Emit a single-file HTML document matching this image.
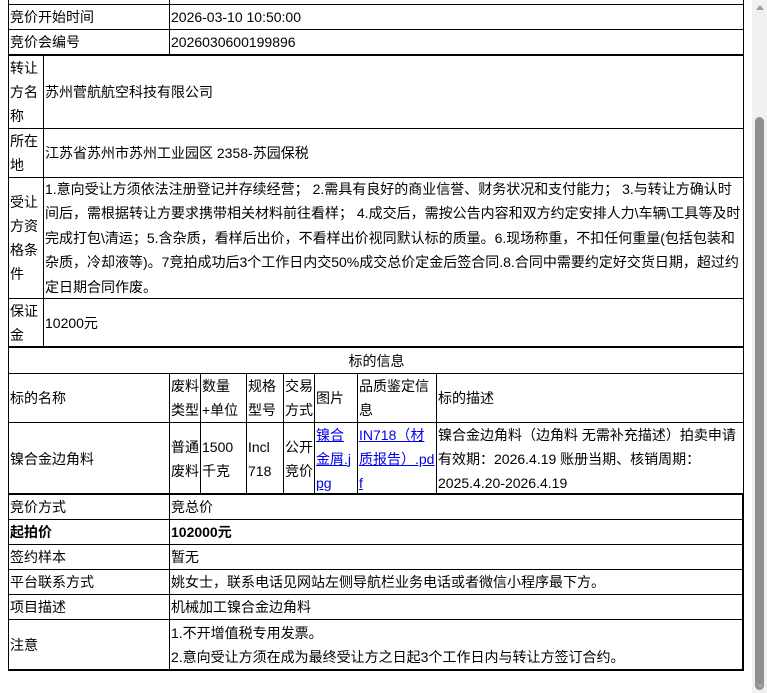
<!DOCTYPE html>
<html><head><meta charset="utf-8"><style>
*{margin:0;padding:0;box-sizing:border-box}
body{width:767px;height:693px;overflow:hidden;background:#fff;position:relative;font-family:"Liberation Sans","Noto Sans CJK SC",sans-serif;font-size:14px;color:#000}
.c{position:absolute;border:1px solid #000;display:flex;align-items:center;padding-left:1px;line-height:24px;overflow:hidden}
.t{position:absolute;background:#000}
a{color:#00e;text-decoration:underline}
.sb{position:absolute;left:752px;top:0;width:15px;height:693px;background:#f1f1f1}
.th{position:absolute;left:755px;top:117px;width:9px;height:573px;background:#8f8f8f;border-radius:5px}
</style></head><body>
<div class="c" style="left:8px;top:-20px;width:162px;height:25px"></div>
<div class="c" style="left:169px;top:-20px;width:575px;height:25px"></div>
<div class="c" style="left:8px;top:4px;width:162px;height:26px">竞价开始时间</div>
<div class="c" style="left:169px;top:4px;width:575px;height:26px">2026-03-10 10:50:00</div>
<div class="c" style="left:8px;top:29px;width:162px;height:26px">竞价会编号</div>
<div class="c" style="left:169px;top:29px;width:575px;height:26px">2026030600199896</div>
<div class="t" style="left:8px;top:54px;width:736px;height:2px"></div>

<div class="c" style="left:8px;top:55px;width:36px;height:74px">转让<br>方名<br>称</div>
<div class="c" style="left:43px;top:55px;width:701px;height:74px">苏州菅航航空科技有限公司</div>
<div class="c" style="left:8px;top:128px;width:36px;height:50px">所在<br>地</div>
<div class="c" style="left:43px;top:128px;width:701px;height:50px">江苏省苏州市苏州工业园区 2358-苏园保税</div>
<div class="c" style="left:8px;top:177px;width:36px;height:122px">受让<br>方资<br>格条<br>件</div>
<div class="c" style="left:43px;top:177px;width:701px;height:122px;line-height:24.4px">1.意向受让方须依法注册登记并存续经营； 2.需具有良好的商业信誉、财务状况和支付能力； 3.与转让方确认时间后，需根据转让方要求携带相关材料前往看样； 4.成交后，需按公告内容和双方约定安排人力\车辆\工具等及时完成打包\清运；5.含杂质，看样后出价，不看样出价视同默认标的质量。6.现场称重，不扣任何重量(包括包装和杂质，冷却液等)。7竞拍成功后3个工作日内交50%成交总价定金后签合同.8.合同中需要约定好交货日期，超过约定日期合同作废。</div>
<div class="c" style="left:8px;top:298px;width:36px;height:50px">保证<br>金</div>
<div class="c" style="left:43px;top:298px;width:701px;height:50px">10200元</div>
<div class="t" style="left:8px;top:346px;width:736px;height:2px"></div>

<div class="c" style="left:8px;top:347px;width:736px;height:27px;justify-content:center">标的信息</div>
<div class="c" style="left:8px;top:373px;width:162px;height:50px">标的名称</div>
<div class="c" style="left:169px;top:373px;width:32px;height:50px">废料<br>类型</div>
<div class="c" style="left:200px;top:373px;width:47px;height:50px">数量<br>+单位</div>
<div class="c" style="left:246px;top:373px;width:38px;height:50px">规格<br>型号</div>
<div class="c" style="left:283px;top:373px;width:32px;height:50px">交易<br>方式</div>
<div class="c" style="left:314px;top:373px;width:44px;height:50px">图片</div>
<div class="c" style="left:357px;top:373px;width:80px;height:50px">品质鉴定信<br>息</div>
<div class="c" style="left:436px;top:373px;width:308px;height:50px">标的描述</div>
<div class="c" style="left:8px;top:422px;width:162px;height:73px">镍合金边角料</div>
<div class="c" style="left:169px;top:422px;width:32px;height:73px">普通<br>废料</div>
<div class="c" style="left:200px;top:422px;width:47px;height:73px">1500<br>千克</div>
<div class="c" style="left:246px;top:422px;width:38px;height:73px">Incl<br>718</div>
<div class="c" style="left:283px;top:422px;width:32px;height:73px">公开<br>竞价</div>
<div class="c" style="left:314px;top:422px;width:44px;height:73px"><a>镍合<br>金屑.j<br>pg</a></div>
<div class="c" style="left:357px;top:422px;width:80px;height:73px"><a>IN718（材<br>质报告）.pd<br>f</a></div>
<div class="c" style="left:436px;top:422px;width:308px;height:73px">镍合金边角料（边角料 无需补充描述）拍卖申请<br>有效期：2026.4.19 账册当期、核销周期：<br>2025.4.20-2026.4.19</div>
<div class="t" style="left:8px;top:493px;width:736px;height:2px"></div>

<div class="c" style="left:8px;top:494px;width:162px;height:26px">竞价方式</div>
<div class="c" style="left:169px;top:494px;width:575px;height:26px;border-right-width:2px">竞总价</div>
<div class="c" style="left:8px;top:519px;width:162px;height:26px;font-weight:bold">起拍价</div>
<div class="c" style="left:169px;top:519px;width:575px;height:26px;border-right-width:2px;font-weight:bold">102000元</div>
<div class="c" style="left:8px;top:544px;width:162px;height:26px">签约样本</div>
<div class="c" style="left:169px;top:544px;width:575px;height:26px;border-right-width:2px">暂无</div>
<div class="c" style="left:8px;top:569px;width:162px;height:26px">平台联系方式</div>
<div class="c" style="left:169px;top:569px;width:575px;height:26px;border-right-width:2px">姚女士，联系电话见网站左侧导航栏业务电话或者微信小程序最下方。</div>
<div class="c" style="left:8px;top:594px;width:162px;height:26px">项目描述</div>
<div class="c" style="left:169px;top:594px;width:575px;height:26px;border-right-width:2px">机械加工镍合金边角料</div>
<div class="c" style="left:8px;top:619px;width:162px;height:52px;border-bottom-width:2px">注意</div>
<div class="c" style="left:169px;top:619px;width:575px;height:52px;border-right-width:2px;border-bottom-width:2px">1.不开增值税专用发票。<br>2.意向受让方须在成为最终受让方之日起3个工作日内与转让方签订合约。</div>

<div class="sb"></div>
<div class="th"></div>
<svg style="position:absolute;left:755px;top:3px" width="10" height="8"><path d="M1 7 L5 2 L9 7 Z" fill="#a0a0a0"/></svg>
<svg style="position:absolute;left:755px;top:683px" width="10" height="8"><path d="M1 1 L5 6 L9 1 Z" fill="#a0a0a0"/></svg>
</body></html>
